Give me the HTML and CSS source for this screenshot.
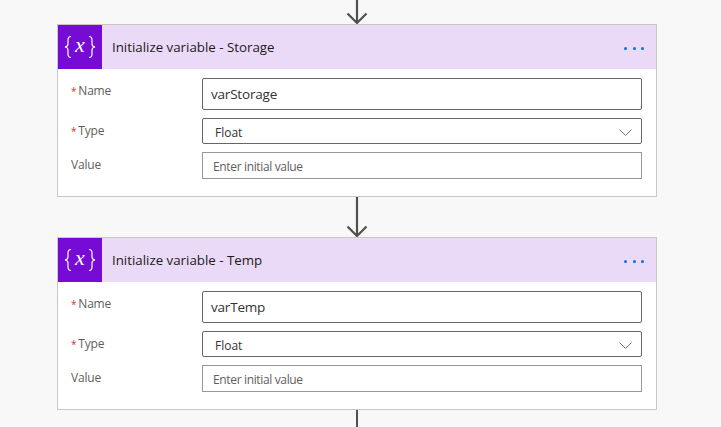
FILE: index.html
```html
<!DOCTYPE html>
<html lang="en">
<head>
<meta charset="UTF-8">
<meta name="viewport" content="width=device-width, initial-scale=1.0">
<title>Flow</title>
<link rel="stylesheet" href="styles.css">
</head>
<body>
  <svg class="arrow arrow-top" width="22" height="24" viewBox="0 0 22 24">
    <path d="M11 0V23M1.5 13.5L11 23L20.5 13.5" fill="none" stroke="#505050" stroke-width="2.2"/>
  </svg>

  <div class="card">
    <div class="card-header">
      <div class="card-icon">
        <svg width="44" height="44" viewBox="0 0 44 44">
          <path d="M13 11.5C10.5 11.5 10 12.5 10 15V19C10 21 9 21.7 7 22C9 22.3 10 23 10 25V29C10 31.5 10.5 32.5 13 32.5M31 11.5C33.5 11.5 34 12.5 34 15V19C34 21 35 21.7 37 22C35 22.3 34 23 34 25V29C34 31.5 33.5 32.5 31 32.5" fill="none" stroke="#fff" stroke-width="1.2"/>
          <text x="22" y="26.5" class="icon-x">x</text>
        </svg>
      </div>
      <div class="card-title">Initialize variable - Storage</div>
      <div class="card-more"><span></span><span></span><span></span></div>
    </div>
    <div class="card-body">
      <div class="row row-name">
        <label class="label"><span class="req">*</span>Name</label>
        <div class="field field-name">varStorage</div>
      </div>
      <div class="row row-type">
        <label class="label"><span class="req">*</span>Type</label>
        <div class="field field-type"><span class="type-text">Float</span>
          <svg width="13" height="8" viewBox="0 0 13 8"><path d="M0.5 0.5L6.5 6.5L12.5 0.5" fill="none" stroke="#777" stroke-width="1"/></svg>
        </div>
      </div>
      <div class="row row-value">
        <label class="label">Value</label>
        <div class="field field-value">Enter initial value</div>
      </div>
    </div>
  </div>

  <svg class="arrow" width="22" height="40" viewBox="0 0 22 40">
    <path d="M11 0V39M1.5 29.5L11 39L20.5 29.5" fill="none" stroke="#505050" stroke-width="2.2"/>
  </svg>

  <div class="card">
    <div class="card-header">
      <div class="card-icon">
        <svg width="44" height="44" viewBox="0 0 44 44">
          <path d="M13 11.5C10.5 11.5 10 12.5 10 15V19C10 21 9 21.7 7 22C9 22.3 10 23 10 25V29C10 31.5 10.5 32.5 13 32.5M31 11.5C33.5 11.5 34 12.5 34 15V19C34 21 35 21.7 37 22C35 22.3 34 23 34 25V29C34 31.5 33.5 32.5 31 32.5" fill="none" stroke="#fff" stroke-width="1.2"/>
          <text x="22" y="26.5" class="icon-x">x</text>
        </svg>
      </div>
      <div class="card-title">Initialize variable - Temp</div>
      <div class="card-more"><span></span><span></span><span></span></div>
    </div>
    <div class="card-body">
      <div class="row row-name">
        <label class="label"><span class="req">*</span>Name</label>
        <div class="field field-name">varTemp</div>
      </div>
      <div class="row row-type">
        <label class="label"><span class="req">*</span>Type</label>
        <div class="field field-type"><span class="type-text">Float</span>
          <svg width="13" height="8" viewBox="0 0 13 8"><path d="M0.5 0.5L6.5 6.5L12.5 0.5" fill="none" stroke="#777" stroke-width="1"/></svg>
        </div>
      </div>
      <div class="row row-value">
        <label class="label">Value</label>
        <div class="field field-value">Enter initial value</div>
      </div>
    </div>
  </div>

  <div class="line-bottom"></div>
</body>
</html>
```

FILE: styles.css
```css
html, body {
  height: 100%;
}
body {
  font-family: "Open Sans", "Noto Sans", Arial, sans-serif;
  background-color: #f8f8f8;
  margin: 0;
  display: flex;
  flex-direction: column;
  align-items: flex-start;
  padding-left: 57px;
  overflow: hidden;
  color: #333333;
}
.arrow {
  display: block;
  margin-left: 289px;
  flex-shrink: 0;
}
.card {
  box-sizing: border-box;
  width: 600px;
  height: 173px;
  border: 1px solid #c8c8c8;
  background-color: #ffffff;
  flex-shrink: 0;
}
.card-header {
  display: flex;
  align-items: center;
  height: 44px;
  background-color: #eadaf8;
}
.card-icon {
  width: 44px;
  height: 44px;
  background-color: #770bd6;
}
.card-icon svg {
  display: block;
}
.icon-x {
  font-family: "Liberation Serif", serif;
  font-style: italic;
  font-size: 22px;
  fill: #ffffff;
  text-anchor: middle;
}
.card-title {
  flex: 1;
  margin-left: 10px;
  font-size: 13.3px;
  color: #1a1a1a;
}
.card-more {
  display: flex;
  gap: 5.4px;
  margin-right: 12px;
  padding-top: 2px;
}
.card-more span {
  width: 3px;
  height: 3px;
  border-radius: 50%;
  background-color: #0a6fe0;
}
.card-body {
  padding: 9px 14px 0 13px;
}
.row {
  display: flex;
}
.row-type,
.row-value {
  margin-top: 8px;
}
.label {
  width: 131px;
  margin-top: 5px;
  font-size: 12px;
  letter-spacing: -0.2px;
  color: #605e5c;
  line-height: 16px;
}
.req {
  color: #d13438;
  font-size: 10px;
  margin-right: 2px;
}
.field {
  box-sizing: border-box;
  width: 440px;
  border-radius: 2px;
  display: flex;
  align-items: center;
  justify-content: space-between;
  background-color: #ffffff;
  color: #333333;
}
.field-name {
  height: 32px;
  border: 1px solid #666666;
  padding: 0 8px;
  font-size: 13.5px;
  letter-spacing: -0.2px;
}
.field-type {
  height: 26px;
  border: 1px solid #666666;
  padding: 0 9px 0 12px;
  font-size: 12px;
}
.type-text {
  padding-top: 2px;
}
.field-type svg {
  margin-top: 3px;
}
.field-value {
  height: 27px;
  border: 1px solid #999999;
  border-radius: 0;
  padding: 2px 10px 0;
  font-size: 12px;
  letter-spacing: -0.35px;
  color: #605e5c;
}
.line-bottom {
  width: 2px;
  height: 17px;
  margin-left: 299px;
  background-color: #505050;
  flex-shrink: 0;
}
```
